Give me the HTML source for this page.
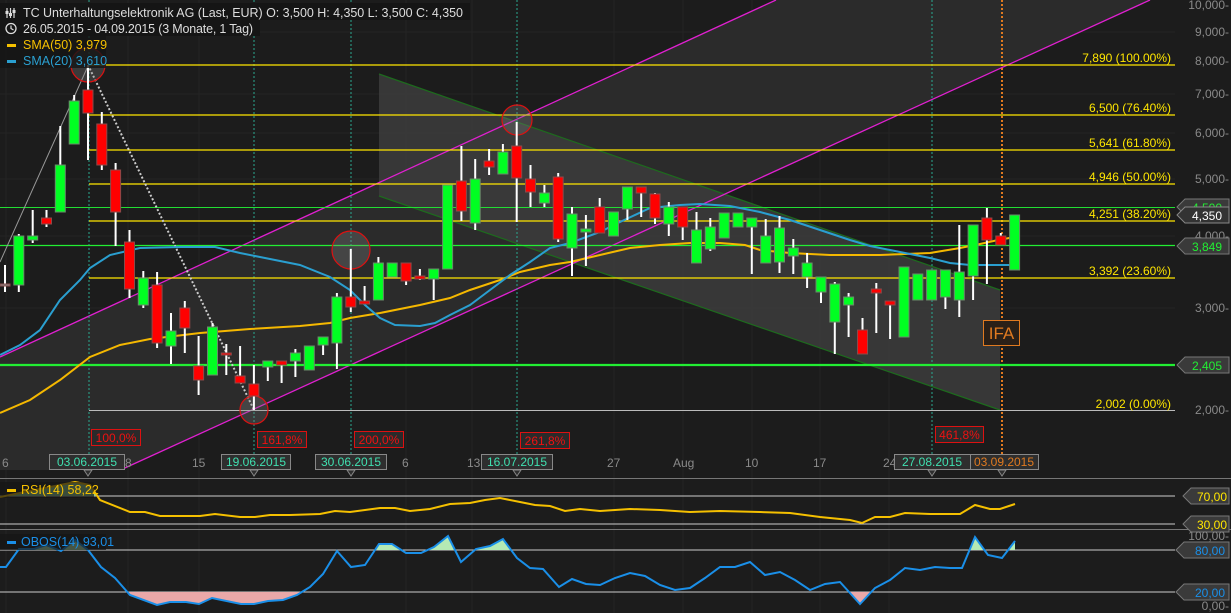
<!DOCTYPE html>
<html><head><meta charset="utf-8"><style>
html,body{margin:0;padding:0;background:#1c1c1c;}
svg{display:block;font-family:"Liberation Sans",sans-serif;}
</style></head><body>
<svg width="1231" height="613" viewBox="0 0 1231 613" xmlns="http://www.w3.org/2000/svg">
<defs>
<clipPath id="main"><rect x="0" y="0" width="1175" height="470"/></clipPath>
<clipPath id="rsiTop"><rect x="0" y="480" width="1175" height="16"/></clipPath>
<clipPath id="obTop"><rect x="0" y="531" width="1175" height="19"/></clipPath>
<clipPath id="obBot"><rect x="0" y="592" width="1175" height="21"/></clipPath>
</defs>
<rect width="1231" height="613" fill="#1c1c1c"/>
<!-- grid -->
<g stroke="#242424" stroke-width="1">
<line x1="0" y1="32" x2="1175" y2="32"/><line x1="0" y1="94" x2="1175" y2="94"/><line x1="0" y1="133" x2="1175" y2="133"/><line x1="0" y1="179" x2="1175" y2="179"/><line x1="0" y1="236" x2="1175" y2="236"/><line x1="0" y1="308" x2="1175" y2="308"/>
<line x1="128" y1="0" x2="128" y2="613"/><line x1="199" y1="0" x2="199" y2="613"/><line x1="406" y1="0" x2="406" y2="613"/><line x1="472" y1="0" x2="472" y2="613"/><line x1="614" y1="0" x2="614" y2="613"/><line x1="683" y1="0" x2="683" y2="613"/><line x1="752" y1="0" x2="752" y2="613"/><line x1="820" y1="0" x2="820" y2="613"/><line x1="889" y1="0" x2="889" y2="613"/><line x1="6" y1="0" x2="6" y2="613"/>
</g>
<g clip-path="url(#main)">
<!-- channel band -->
<polygon points="0,357 776,0 1150,0 0,525" fill="#2b2b2b"/>
<polygon points="379,74 1000,290 1000,410 379,196" fill="#3c3c3c" fill-opacity="0.85"/>
<line x1="379" y1="74" x2="1000" y2="290" stroke="#1d6b1d" stroke-width="1.2"/>
<line x1="379" y1="196" x2="1000" y2="410" stroke="#1d6b1d" stroke-width="1.2"/>
<line x1="0" y1="357" x2="776" y2="0" stroke="#e020d0" stroke-width="1.3"/>
<line x1="0" y1="525" x2="1150" y2="0" stroke="#e020d0" stroke-width="1.3"/>
<!-- vertical markers -->
<g stroke="#2aa890" stroke-width="1" stroke-dasharray="2,2">
<line x1="89" y1="0" x2="89" y2="470"/><line x1="254" y1="0" x2="254" y2="470"/><line x1="351" y1="0" x2="351" y2="470"/><line x1="517" y1="0" x2="517" y2="470"/><line x1="932" y1="0" x2="932" y2="470"/>
</g>
<line x1="1002" y1="0" x2="1002" y2="470" stroke="#e07a20" stroke-width="2" stroke-dasharray="2,2"/>
<!-- horizontal levels -->
<g stroke="#ffe600" stroke-width="1.3">
<line x1="89" y1="65" x2="1175" y2="65"/><line x1="89" y1="115" x2="1175" y2="115"/><line x1="89" y1="150" x2="1175" y2="150"/><line x1="89" y1="184" x2="1175" y2="184"/><line x1="89" y1="221" x2="1175" y2="221"/><line x1="89" y1="278" x2="1175" y2="278"/>
</g>
<line x1="89" y1="410.5" x2="1175" y2="410.5" stroke="#bbbbbb" stroke-width="1"/>
<line x1="0" y1="207.5" x2="1175" y2="207.5" stroke="#22dd33" stroke-width="1"/>
<line x1="0" y1="245.5" x2="1175" y2="245.5" stroke="#22ee33" stroke-width="1.3"/>
<line x1="0" y1="365" x2="1175" y2="365" stroke="#22ee33" stroke-width="2.2"/>
<!-- fib text -->
<g fill="#ffe600" font-size="12" text-anchor="end">
<text x="1171" y="62">7,890 (100.00%)</text><text x="1171" y="112">6,500 (76.40%)</text><text x="1171" y="147">5,641 (61.80%)</text><text x="1171" y="181">4,946 (50.00%)</text><text x="1171" y="218">4,251 (38.20%)</text><text x="1171" y="275">3,392 (23.60%)</text><text x="1171" y="408">2,002 (0.00%)</text>
</g>
<!-- trend lines -->
<line x1="0" y1="262" x2="88" y2="66" stroke="#999" stroke-width="1"/>
<line x1="88" y1="65" x2="254" y2="410" stroke="#cccccc" stroke-width="2" stroke-dasharray="2,2"/>
<!-- circles -->
<g fill="#808080" fill-opacity="0.3" stroke="#dd1111" stroke-width="1.2">
<circle cx="88" cy="65" r="17"/><circle cx="254" cy="410" r="14"/><circle cx="351" cy="250" r="19"/><circle cx="517" cy="120" r="15"/>
</g>
<!-- SMAs -->
<polyline fill="none" stroke="#f5b800" stroke-width="2" points="0,413 30,400 60,380 90,357 120,345 150,339 200,333 250,329 300,326 330,323 350,318 380,313 420,305 450,298 470,290 500,280 520,272 550,265 570,262 600,255 630,248 660,245 690,243 720,243 745,245 760,250 790,253 830,255 880,255 930,253 960,248 980,244 998,240 1015,237"/>
<polyline fill="none" stroke="#2a9fd0" stroke-width="2" points="0,355 20,345 40,330 60,300 80,280 90,268 110,255 140,248 180,247 215,247 240,253 260,257 300,265 330,277 350,290 365,305 380,318 395,325 420,326 435,323 450,315 470,305 490,290 510,275 530,262 550,248 570,243 600,232 620,222 650,208 680,205 700,204 730,206 760,212 790,220 820,230 850,240 870,246 900,252 930,258 950,263 970,265 990,265 1015,265"/>
<!-- wicks -->
<g stroke="#ffffff" stroke-width="2">
<line x1="5" y1="265" x2="5" y2="292"/><line x1="18.8" y1="234" x2="18.8" y2="292"/><line x1="32.7" y1="210" x2="32.7" y2="243"/><line x1="46.5" y1="210" x2="46.5" y2="227"/><line x1="60.3" y1="126" x2="60.3" y2="212"/><line x1="74.2" y1="95" x2="74.2" y2="144"/><line x1="88" y1="65" x2="88" y2="160"/><line x1="101.8" y1="112" x2="101.8" y2="170"/><line x1="115.6" y1="163" x2="115.6" y2="246"/><line x1="129.5" y1="230" x2="129.5" y2="298"/><line x1="143.3" y1="271" x2="143.3" y2="308"/><line x1="157.1" y1="272" x2="157.1" y2="348"/><line x1="171" y1="313" x2="171" y2="364"/><line x1="184.8" y1="301" x2="184.8" y2="353"/><line x1="198.6" y1="336" x2="198.6" y2="395"/><line x1="212.5" y1="323" x2="212.5" y2="375"/><line x1="226.3" y1="344" x2="226.3" y2="375"/><line x1="240.1" y1="346" x2="240.1" y2="383"/><line x1="253.9" y1="365" x2="253.9" y2="410"/><line x1="267.8" y1="361" x2="267.8" y2="381"/><line x1="281.6" y1="361" x2="281.6" y2="383"/><line x1="295.4" y1="349" x2="295.4" y2="377"/><line x1="323.1" y1="337" x2="323.1" y2="355"/><line x1="336.9" y1="293" x2="336.9" y2="369"/><line x1="350.8" y1="249" x2="350.8" y2="312"/><line x1="364.6" y1="286" x2="364.6" y2="304"/><line x1="378.4" y1="257" x2="378.4" y2="300"/><line x1="406.1" y1="263" x2="406.1" y2="285"/><line x1="419.9" y1="269" x2="419.9" y2="280"/><line x1="433.7" y1="269" x2="433.7" y2="300"/><line x1="461.4" y1="146" x2="461.4" y2="221"/><line x1="475.2" y1="159" x2="475.2" y2="230"/><line x1="489.1" y1="149" x2="489.1" y2="175"/><line x1="502.9" y1="144" x2="502.9" y2="174"/><line x1="516.7" y1="122" x2="516.7" y2="222"/><line x1="530.5" y1="165" x2="530.5" y2="207"/><line x1="544.4" y1="185" x2="544.4" y2="207"/><line x1="558.2" y1="173" x2="558.2" y2="242"/><line x1="572" y1="207" x2="572" y2="276"/><line x1="585.9" y1="215" x2="585.9" y2="266"/><line x1="599.7" y1="198" x2="599.7" y2="233"/><line x1="627.4" y1="187" x2="627.4" y2="220"/><line x1="641.2" y1="187" x2="641.2" y2="217"/><line x1="655" y1="193" x2="655" y2="224"/><line x1="668.8" y1="202" x2="668.8" y2="236"/><line x1="682.7" y1="207" x2="682.7" y2="240"/><line x1="696.5" y1="212" x2="696.5" y2="263"/><line x1="710.3" y1="218" x2="710.3" y2="251"/><line x1="751.8" y1="218" x2="751.8" y2="274"/><line x1="765.7" y1="219" x2="765.7" y2="263"/><line x1="779.5" y1="216" x2="779.5" y2="273"/><line x1="793.3" y1="239" x2="793.3" y2="274"/><line x1="807.1" y1="253" x2="807.1" y2="288"/><line x1="821" y1="277" x2="821" y2="303"/><line x1="834.8" y1="282" x2="834.8" y2="354"/><line x1="848.6" y1="293" x2="848.6" y2="337"/><line x1="862.5" y1="318" x2="862.5" y2="354"/><line x1="876.3" y1="283" x2="876.3" y2="333"/><line x1="890.1" y1="301" x2="890.1" y2="339"/><line x1="945.4" y1="270" x2="945.4" y2="309"/><line x1="959.3" y1="225" x2="959.3" y2="317"/><line x1="973.1" y1="225" x2="973.1" y2="300"/><line x1="986.9" y1="208" x2="986.9" y2="284"/><line x1="1000.8" y1="233" x2="1000.8" y2="245"/>
</g>
<!-- green bodies -->
<g fill="#00ff22" stroke="#6a8a6a" stroke-width="1">
<rect x="13.8" y="236" width="10" height="49"/><rect x="27.7" y="236" width="10" height="4"/><rect x="55.3" y="165" width="10" height="47"/><rect x="69.2" y="101" width="10" height="43"/><rect x="138.3" y="278" width="10" height="27"/><rect x="166" y="331" width="10" height="15"/><rect x="207.5" y="327" width="10" height="48"/><rect x="262.8" y="361" width="10" height="6"/><rect x="290.4" y="353" width="10" height="8"/><rect x="304.3" y="346" width="10" height="24"/><rect x="318.1" y="337" width="10" height="8"/><rect x="331.9" y="297" width="10" height="46"/><rect x="373.4" y="263" width="10" height="37"/><rect x="387.2" y="263" width="10" height="14"/><rect x="428.7" y="269" width="10" height="10"/><rect x="442.6" y="185" width="10" height="84"/><rect x="470.2" y="179" width="10" height="44"/><rect x="497.9" y="152" width="10" height="22"/><rect x="539.4" y="193" width="10" height="10"/><rect x="567" y="214" width="10" height="34"/><rect x="580.9" y="229" width="10" height="3"/><rect x="608.5" y="212" width="10" height="24"/><rect x="622.4" y="187" width="10" height="22"/><rect x="663.8" y="207" width="10" height="17"/><rect x="691.5" y="230" width="10" height="33"/><rect x="705.3" y="227" width="10" height="22"/><rect x="719.2" y="213" width="10" height="25"/><rect x="733" y="213" width="10" height="14"/><rect x="746.8" y="218" width="10" height="9"/><rect x="760.7" y="236" width="10" height="27"/><rect x="774.5" y="228" width="10" height="34"/><rect x="788.3" y="248" width="10" height="8"/><rect x="802.1" y="263" width="10" height="14"/><rect x="816" y="277" width="10" height="15"/><rect x="829.8" y="284" width="10" height="38"/><rect x="843.6" y="297" width="10" height="8"/><rect x="899" y="267" width="10" height="70"/><rect x="912.8" y="274" width="10" height="26"/><rect x="926.6" y="270" width="10" height="30"/><rect x="940.4" y="270" width="10" height="27"/><rect x="954.3" y="272" width="10" height="28"/><rect x="968.1" y="225" width="10" height="51"/><rect x="1009.6" y="215" width="10" height="55"/>
</g>
<!-- red bodies -->
<g fill="#ff0000" stroke="#8a4a4a" stroke-width="1">
<rect x="0" y="284" width="10" height="2" fill="#888"/><rect x="41.5" y="218" width="10" height="6"/><rect x="83" y="90" width="10" height="23"/><rect x="96.8" y="124" width="10" height="41"/><rect x="110.6" y="170" width="10" height="42"/><rect x="124.5" y="242" width="10" height="47"/><rect x="152.1" y="285" width="10" height="58"/><rect x="179.8" y="308" width="10" height="20"/><rect x="193.6" y="366" width="10" height="14"/><rect x="221.3" y="353" width="10" height="2"/><rect x="235.1" y="376" width="10" height="7"/><rect x="248.9" y="384" width="10" height="12"/><rect x="276.6" y="361" width="10" height="4"/><rect x="345.8" y="297" width="10" height="10"/><rect x="359.6" y="301" width="10" height="3"/><rect x="401.1" y="263" width="10" height="18"/><rect x="414.9" y="276" width="10" height="3"/><rect x="456.4" y="181" width="10" height="30"/><rect x="484.1" y="161" width="10" height="6"/><rect x="511.7" y="146" width="10" height="32"/><rect x="525.5" y="179" width="10" height="13"/><rect x="553.2" y="177" width="10" height="62"/><rect x="594.7" y="207" width="10" height="26"/><rect x="636.2" y="187" width="10" height="6"/><rect x="650" y="194" width="10" height="24"/><rect x="677.7" y="207" width="10" height="20"/><rect x="857.5" y="330" width="10" height="24"/><rect x="871.3" y="289" width="10" height="4"/><rect x="885.1" y="301" width="10" height="4"/><rect x="981.9" y="218" width="10" height="22"/><rect x="995.8" y="236" width="10" height="9"/>
</g>
<!-- IFA -->
<rect x="983.5" y="320.5" width="36" height="25" fill="#2a2018" stroke="#e07a20" stroke-width="1"/>
<text x="1001.5" y="339" fill="#e07a20" font-size="17" text-anchor="middle">IFA</text>
<!-- red percentage labels -->
<g font-size="12" text-anchor="middle">
<rect x="91.5" y="429.5" width="49" height="16" fill="#2a2a2a" stroke="#dd1111"/><text x="116" y="442" fill="#ee1111">100,0%</text>
<rect x="257.5" y="431.5" width="49" height="16" fill="#2a2a2a" stroke="#dd1111"/><text x="282" y="444" fill="#ee1111">161,8%</text>
<rect x="354.5" y="431.5" width="49" height="16" fill="#2a2a2a" stroke="#dd1111"/><text x="379" y="444" fill="#ee1111">200,0%</text>
<rect x="520.5" y="432.5" width="49" height="16" fill="#2a2a2a" stroke="#dd1111"/><text x="545" y="445" fill="#ee1111">261,8%</text>
<rect x="935.5" y="426.5" width="48" height="16" fill="#2a2a2a" stroke="#dd1111"/><text x="959.5" y="439" fill="#ee1111">461,8%</text>
</g>
</g>
<!-- legend -->
<rect x="0" y="3" width="470" height="17" fill="#151515"/>
<rect x="0" y="20" width="260" height="16" fill="#151515"/>
<rect x="0" y="36" width="106" height="32" fill="#151515" fill-opacity="0.8"/>
<g fill="#dddddd" font-size="12.5">
<g stroke="#dddddd" stroke-width="1.2"><line x1="7" y1="8" x2="7" y2="18"/><line x1="10.5" y1="8" x2="10.5" y2="18"/><line x1="14" y1="8" x2="14" y2="18"/></g>
<rect x="5.5" y="11" width="3" height="3"/><rect x="9" y="13" width="3" height="3"/><rect x="12.5" y="10" width="3" height="3"/>
<text x="23" y="17" textLength="440">TC Unterhaltungselektronik AG (Last, EUR)  O: 3,500  H: 4,350  L: 3,500  C: 4,350</text>
<circle cx="11" cy="28.5" r="5" fill="none" stroke="#dddddd" stroke-width="1.3"/><polyline points="11,25.5 11,28.5 13.5,30" fill="none" stroke="#dddddd" stroke-width="1.2"/>
<text x="23" y="33" textLength="230">26.05.2015 - 04.09.2015 (3 Monate, 1 Tag)</text>
</g>
<rect x="7" y="44" width="9" height="3" fill="#f5c000"/>
<text x="23" y="49" font-size="12.5" fill="#f5c000">SMA(50)  3,979</text>
<rect x="7" y="60" width="9" height="3" fill="#2a9fd0"/>
<text x="23" y="65" font-size="12.5" fill="#2a9fd0">SMA(20)  3,610</text>
<!-- right axis -->
<g fill="#8a8a8a" font-size="12" text-anchor="end">
<text x="1229" y="9">10,000-</text><text x="1229" y="36">9,000-</text><text x="1229" y="65">8,000-</text><text x="1229" y="98">7,000-</text><text x="1229" y="137">6,000-</text><text x="1229" y="183">5,000-</text><text x="1229" y="240">4,000-</text><text x="1229" y="312">3,000-</text><text x="1229" y="414">2,000-</text>
</g>
<g font-size="12" text-anchor="end">
<polygon points="1177,207 1185,199 1229,199 1229,215 1185,215" fill="#3a3a3a" stroke="#777"/><text x="1222" y="212" fill="#22ee33">4,500</text>
<polygon points="1177,215 1185,207 1229,207 1229,223 1185,223" fill="#333" stroke="#888"/><text x="1222" y="220" fill="#ffffff">4,350</text>
<polygon points="1177,246 1185,238 1229,238 1229,254 1185,254" fill="#3a3a3a" stroke="#777"/><text x="1222" y="251" fill="#22ee33">3,849</text>
<polygon points="1177,365 1185,357 1229,357 1229,373 1185,373" fill="#3a3a3a" stroke="#777"/><text x="1222" y="370" fill="#22ee33">2,405</text>
</g>
<!-- x axis -->
<line x1="0" y1="478.5" x2="1231" y2="478.5" stroke="#777" stroke-width="1"/>
<g fill="#8a8a8a" font-size="12">
<text x="2" y="467">6</text><text x="125" y="467">8</text><text x="192" y="467">15</text><text x="402" y="467">6</text><text x="467" y="467">13</text><text x="607" y="467">27</text><text x="673" y="467">Aug</text><text x="745" y="467">10</text><text x="813" y="467">17</text><text x="883" y="467">24</text>
</g>
<g font-size="12" text-anchor="middle">
<rect x="49.5" y="454.5" width="75" height="15" fill="#2e2e2e" stroke="#888"/><polygon points="84,470 88,476 92,470" fill="#2e2e2e" stroke="#888"/><text x="87" y="466" fill="#40e0b0">03.06.2015</text>
<rect x="221.5" y="454.5" width="69" height="15" fill="#2e2e2e" stroke="#888"/><polygon points="250,470 254,476 258,470" fill="#2e2e2e" stroke="#888"/><text x="256" y="466" fill="#40e0b0">19.06.2015</text>
<rect x="315.5" y="454.5" width="71" height="15" fill="#2e2e2e" stroke="#888"/><polygon points="347,470 351,476 355,470" fill="#2e2e2e" stroke="#888"/><text x="351" y="466" fill="#40e0b0">30.06.2015</text>
<rect x="481.5" y="454.5" width="71" height="15" fill="#2e2e2e" stroke="#888"/><polygon points="513,470 517,476 521,470" fill="#2e2e2e" stroke="#888"/><text x="517" y="466" fill="#40e0b0">16.07.2015</text>
<rect x="894.5" y="454.5" width="76" height="15" fill="#2e2e2e" stroke="#888"/><polygon points="928,470 932,476 936,470" fill="#2e2e2e" stroke="#888"/><text x="932" y="466" fill="#40e0b0">27.08.2015</text>
<rect x="970.5" y="454.5" width="68" height="15" fill="#2e2e2e" stroke="#888"/><polygon points="998,470 1002,476 1006,470" fill="#2e2e2e" stroke="#888"/><text x="1004" y="466" fill="#e07a20">03.09.2015</text>
</g>
<!-- RSI panel -->
<line x1="0" y1="496" x2="1175" y2="496" stroke="#cccccc" stroke-width="1"/>
<line x1="0" y1="524" x2="1175" y2="524" stroke="#cccccc" stroke-width="1"/>
<polygon clip-path="url(#rsiTop)" fill="#8fce8f" points="0,497 20,493 45,488 75,482 90,485 100,500 0,500"/>
<polyline fill="none" stroke="#f5c000" stroke-width="2" points="0,497 20,493 45,488 75,482 90,485 100,500 130,512 145,512 160,516 200,516 215,514 240,517 255,517 270,515 290,515 320,514 335,511 350,512 380,508 395,508 410,511 430,509 450,504 470,503 485,500 500,498 520,502 535,505 550,506 565,511 580,509 600,511 630,509 660,510 690,512 720,511 760,512 790,513 820,517 850,520 862,523 875,517 890,517 905,513 930,514 960,514 975,505 990,509 1000,509 1015,504"/>
<rect x="0" y="482" width="94" height="16" fill="#151515" fill-opacity="0.7"/>
<rect x="7" y="489" width="9" height="3" fill="#f5c000"/>
<text x="21" y="494" font-size="12.5" fill="#f5c000">RSI(14)  58,22</text>
<line x1="0" y1="529.5" x2="1231" y2="529.5" stroke="#777" stroke-width="1"/>
<g font-size="12" text-anchor="end">
<polygon points="1183,496 1191,488 1229,488 1229,504 1191,504" fill="#3a3a3a" stroke="#777"/><text x="1227" y="501" fill="#ffe600">70,00</text>
<polygon points="1183,524 1191,516 1229,516 1229,532 1191,532" fill="#3a3a3a" stroke="#777"/><text x="1227" y="529" fill="#ffe600">30,00</text>
</g>
<!-- OBOS panel -->
<line x1="0" y1="550" x2="1175" y2="550" stroke="#cccccc" stroke-width="1"/>
<line x1="0" y1="592" x2="1175" y2="592" stroke="#cccccc" stroke-width="1"/>
<g id="obfill">
<polygon clip-path="url(#obTop)" fill="#b4eab4" points="0,567 6,567 19,549 34,549 46,545 61,551 75,540 88,550 101,567 115,578 130,595 157,605 170,602 186,602 199,604 212,598 241,604 254,604 268,601 283,600 297,595 310,587 323,574 337,551 351,567 365,565 379,544 392,544 406,553 421,553 434,547 448,536 461,562 476,549 490,546 503,539 517,558 530,568 543,569 559,587 572,579 586,584 600,585 615,578 630,573 645,576 660,585 675,590 690,588 705,578 720,567 735,567 750,562 765,575 780,572 795,580 810,590 825,584 840,582 860,604 875,588 890,580 905,568 920,570 935,567 950,568 962,568 975,537 988,555 1002,558 1015,541 1015,560 0,560"/>
<polygon clip-path="url(#obBot)" fill="#eaa8a8" points="0,567 6,567 19,549 34,549 46,545 61,551 75,540 88,550 101,567 115,578 130,595 157,605 170,602 186,602 199,604 212,598 241,604 254,604 268,601 283,600 297,595 310,587 323,574 337,551 351,567 365,565 379,544 392,544 406,553 421,553 434,547 448,536 461,562 476,549 490,546 503,539 517,558 530,568 543,569 559,587 572,579 586,584 600,585 615,578 630,573 645,576 660,585 675,590 690,588 705,578 720,567 735,567 750,562 765,575 780,572 795,580 810,590 825,584 840,582 860,604 875,588 890,580 905,568 920,570 935,567 950,568 962,568 975,537 988,555 1002,558 1015,541 1015,585 0,585"/>
</g>
<polyline fill="none" stroke="#1a8fe8" stroke-width="2" points="0,567 6,567 19,549 34,549 46,545 61,551 75,540 88,550 101,567 115,578 130,595 157,605 170,602 186,602 199,604 212,598 241,604 254,604 268,601 283,600 297,595 310,587 323,574 337,551 351,567 365,565 379,544 392,544 406,553 421,553 434,547 448,536 461,562 476,549 490,546 503,539 517,558 530,568 543,569 559,587 572,579 586,584 600,585 615,578 630,573 645,576 660,585 675,590 690,588 705,578 720,567 735,567 750,562 765,575 780,572 795,580 810,590 825,584 840,582 860,604 875,588 890,580 905,568 920,570 935,567 950,568 962,568 975,537 988,555 1002,558 1015,541"/>
<rect x="0" y="534" width="106" height="16" fill="#151515" fill-opacity="0.7"/>
<rect x="7" y="541" width="9" height="3" fill="#1a8fe8"/>
<text x="21" y="546" font-size="12.5" fill="#1a8fe8">OBOS(14)  93,01</text>
<g fill="#8a8a8a" font-size="12" text-anchor="end">
<text x="1229" y="540">100,00-</text><text x="1229" y="610">0,00-</text>
</g>
<g font-size="12" text-anchor="end">
<polygon points="1176,550 1184,542 1229,542 1229,558 1184,558" fill="#3a3a3a" stroke="#777"/><text x="1225" y="555" fill="#1a8fe8">80,00</text>
<polygon points="1176,592 1184,584 1229,584 1229,600 1184,600" fill="#3a3a3a" stroke="#777"/><text x="1225" y="597" fill="#1a8fe8">20,00</text>
</g>
</svg>
</body></html>
